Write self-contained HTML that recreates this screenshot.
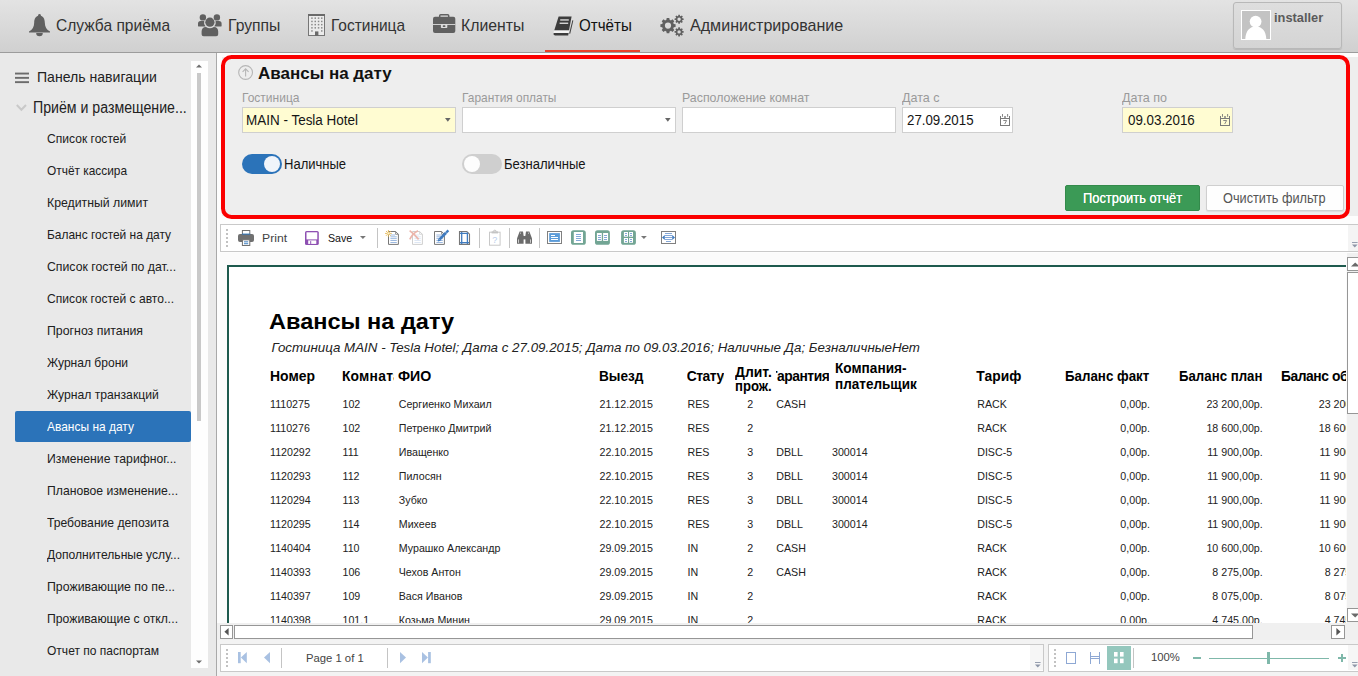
<!DOCTYPE html>
<html lang="ru"><head><meta charset="utf-8"><title>Авансы на дату</title>
<style>
html,body{margin:0;padding:0}
body{width:1358px;height:676px;overflow:hidden;position:relative;background:#fdfdfd;font-family:"Liberation Sans",sans-serif}
.t{position:absolute;white-space:nowrap;line-height:1;transform-origin:0 0;display:block}
.a{position:absolute;box-sizing:border-box}
svg{position:absolute;overflow:visible}
#nav{left:0;top:0;width:1358px;height:53px;background:linear-gradient(#e3e3e3,#d0d0d0);border-bottom:1px solid #9c9c9c}
#side{left:0;top:53px;width:216px;height:623px;background:#e9e9e9}
#sideb{left:216px;top:53px;width:1px;height:623px;background:#a9a9a9}
#panel{left:221px;top:55px;width:1129px;height:164px;border:4px solid #fb0000;border-radius:10.5px}
.inp{height:26px;top:107px;border:1px solid #cfcfcf;background:#fff}
.y{background:#fffcd2}
#tb{left:220px;top:224px;width:1140px;height:28px;background:#fff;border:1px solid #c9c9c9}
#viewer{left:220px;top:253px;width:1127px;height:370px;background:#fbfbfb;overflow:hidden}
#page{left:7px;top:12px;width:1119px;height:360px;background:#fff;border-left:2px solid #1e5a4e;border-top:2px solid #1e5a4e;overflow:hidden}
.sep{width:1px;background:#c4c4c4}
</style></head>
<body>
<div id="nav" class="a"></div>
<svg style="left:28.8px;top:13.7px" width="21" height="23" viewBox="0 0 21 23"><g fill="#606060"><circle cx="10.5" cy="1.3" r="1.3"/><path d="M10.5 1.6C6.6 1.9 5.3 5.2 5.2 8.4C5.1 12.6 3.6 15.6 0 17.6L0 18.4L21 18.4L21 17.6C17.4 15.6 15.9 12.6 15.8 8.4C15.7 5.2 14.4 1.9 10.5 1.6Z"/><path d="M7.2 19.1a3.3 3.2 0 0 0 6.6 0Z"/></g></svg><svg style="left:198px;top:13.9px" width="24" height="23" viewBox="0 0 24 23"><g fill="#606060"><circle cx="4.9" cy="3.4" r="3.2"/><circle cx="18.9" cy="3.4" r="3.2"/><path d="M0 12.2L0 9.6Q0 7 2.6 7L6.2 7Q5.4 10 7.6 12.6L3 12.6Q0 12.6 0 12.2Z"/><path d="M23.6 12.2L23.6 9.6Q23.6 7 21 7L17.6 7Q18.4 10 16.2 12.6L20.6 12.6Q23.6 12.6 23.6 12.2Z"/><circle cx="11.9" cy="8.2" r="4.6"/><path d="M3.6 20.2L3.6 17.6Q3.6 13.2 8 13Q11.9 15.6 15.8 13Q20.2 13.2 20.2 17.6L20.2 20.2Q20.2 22.2 18.2 22.2L5.6 22.2Q3.6 22.2 3.6 20.2Z"/></g></svg><svg style="left:308px;top:14px" width="17" height="22" viewBox="0 0 17 22"><rect x="0.5" y="0.5" width="16" height="21" fill="#ebebeb" stroke="#767676" stroke-width="1"/><rect x="0" y="0" width="17" height="2" fill="#6a6a6a"/><g fill="#8a8a8a"><rect x="3.2" y="3.4" width="1.5" height="1.5"/><rect x="6.5" y="3.4" width="1.5" height="1.5"/><rect x="9.8" y="3.4" width="1.5" height="1.5"/><rect x="13.0" y="3.4" width="1.5" height="1.5"/><rect x="3.2" y="6.7" width="1.5" height="1.5"/><rect x="6.5" y="6.7" width="1.5" height="1.5"/><rect x="9.8" y="6.7" width="1.5" height="1.5"/><rect x="13.0" y="6.7" width="1.5" height="1.5"/><rect x="3.2" y="9.9" width="1.5" height="1.5"/><rect x="6.5" y="9.9" width="1.5" height="1.5"/><rect x="9.8" y="9.9" width="1.5" height="1.5"/><rect x="13.0" y="9.9" width="1.5" height="1.5"/><rect x="3.2" y="13.1" width="1.5" height="1.5"/><rect x="6.5" y="13.1" width="1.5" height="1.5"/><rect x="9.8" y="13.1" width="1.5" height="1.5"/><rect x="13.0" y="13.1" width="1.5" height="1.5"/><rect x="3.2" y="16.2" width="1.5" height="1.5"/><rect x="13.0" y="16.2" width="1.5" height="1.5"/></g><rect x="7" y="17.4" width="3.4" height="4.6" fill="#6a6a6a"/></svg><svg style="left:433px;top:13.9px" width="23" height="20" viewBox="0 0 23 20"><rect x="6.7" y="0.7" width="9" height="4" rx="1" fill="none" stroke="#606060" stroke-width="1.5"/><rect x="0" y="2.8" width="22.3" height="16.3" rx="2" fill="#606060"/><rect x="0" y="10.1" width="22.3" height="0.9" fill="#dcdcdc"/><rect x="7.9" y="10.1" width="6.4" height="3.9" rx="0.8" fill="#dcdcdc"/><rect x="9.8" y="11.2" width="2.6" height="1.7" rx="0.5" fill="#606060"/></svg><svg style="left:553px;top:15.5px" width="21" height="20" viewBox="0 0 21 20"><g fill="#3c3c3c"><path d="M5.6 0.4L18.6 0.4L16 14.6L1.2 14.6Z"/><path d="M0.6 16.9L15.6 16.9L15.2 19.4L2 19.4Q0 19 0.6 16.9Z"/><path d="M19.4 4.2L20.3 4.6L17.2 17.8L16.2 17.4Z"/></g><path d="M1 14.6L16 14.6L15.6 16.9L0.6 16.9Z" fill="#f4f4f4"/><rect x="7.2" y="3.3" width="8.6" height="1.3" fill="#e4e4e4"/><rect x="6.6" y="6.6" width="8.6" height="1.3" fill="#e4e4e4"/></svg><svg style="left:660px;top:13.5px" width="25" height="24" viewBox="0 0 25 24"><path d="M13.78 10.00L15.59 10.30L15.59 12.90L13.78 13.20L13.22 14.56L14.29 16.05L12.45 17.89L10.96 16.82L9.60 17.38L9.30 19.19L6.70 19.19L6.40 17.38L5.04 16.82L3.55 17.89L1.71 16.05L2.78 14.56L2.22 13.20L0.41 12.90L0.41 10.30L2.22 10.00L2.78 8.64L1.71 7.15L3.55 5.31L5.04 6.38L6.40 5.82L6.70 4.01L9.30 4.01L9.60 5.82L10.96 6.38L12.45 5.31L14.29 7.15L13.22 8.64ZM4.90 11.6a3.1 3.1 0 1 0 6.2 0a3.1 3.1 0 1 0 -6.2 0Z" fill="#606060" fill-rule="evenodd"/><path d="M22.38 4.29L23.63 4.42L23.63 5.98L22.38 6.11L22.06 6.88L22.86 7.86L21.76 8.96L20.78 8.16L20.01 8.48L19.88 9.73L18.32 9.73L18.19 8.48L17.42 8.16L16.44 8.96L15.34 7.86L16.14 6.88L15.82 6.11L14.57 5.98L14.57 4.42L15.82 4.29L16.14 3.52L15.34 2.54L16.44 1.44L17.42 2.24L18.19 1.92L18.32 0.67L19.88 0.67L20.01 1.92L20.78 2.24L21.76 1.44L22.86 2.54L22.06 3.52ZM17.40 5.2a1.7 1.7 0 1 0 3.4 0a1.7 1.7 0 1 0 -3.4 0Z" fill="#606060" fill-rule="evenodd"/><path d="M22.38 16.99L23.63 17.12L23.63 18.68L22.38 18.81L22.06 19.58L22.86 20.56L21.76 21.66L20.78 20.86L20.01 21.18L19.88 22.43L18.32 22.43L18.19 21.18L17.42 20.86L16.44 21.66L15.34 20.56L16.14 19.58L15.82 18.81L14.57 18.68L14.57 17.12L15.82 16.99L16.14 16.22L15.34 15.24L16.44 14.14L17.42 14.94L18.19 14.62L18.32 13.37L19.88 13.37L20.01 14.62L20.78 14.94L21.76 14.14L22.86 15.24L22.06 16.22ZM17.40 17.9a1.7 1.7 0 1 0 3.4 0a1.7 1.7 0 1 0 -3.4 0Z" fill="#606060" fill-rule="evenodd"/></svg><div class="a" style="left:1233px;top:2px;width:109px;height:47px;border:1px solid #b8b8b8;border-radius:3px;background:linear-gradient(#dedede,#d4d4d4);box-shadow:0 1px 1px rgba(0,0,0,.12)"></div><svg style="left:1241px;top:10px" width="30" height="30" viewBox="0 0 30 30"><rect x="0.5" y="0.5" width="29" height="29" fill="#c3c3c3" stroke="#fff" stroke-width="1"/><circle cx="14.6" cy="11.6" r="5.9" fill="#fff"/><path d="M4.3 29C4.6 21 8.6 16.4 14.8 16.4C21 16.4 25 21 25.3 29Z" fill="#fff"/></svg><div class="a" style="left:545px;top:50px;width:95px;height:2px;background:#e8412b"></div>
<div id="side" class="a"></div><div id="sideb" class="a"></div>
<div class="a" style="left:191px;top:61px;width:17px;height:607px;background:#fefefe"></div>
<div class="a" style="left:197px;top:73px;width:4px;height:348px;background:#c9c9c9"></div>
<div class="a" style="left:15px;top:411px;width:176px;height:31px;background:#2b73b9;border-radius:2px"></div>
<svg style="left:15px;top:72px" width="14" height="12" viewBox="0 0 14 12"><g fill="#6c6c6c"><rect x="0" y="0.6" width="14" height="1.9"/><rect x="0" y="4.9" width="14" height="1.9"/><rect x="0" y="9.2" width="14" height="1.9"/></g></svg><svg style="left:15.5px;top:104px" width="11" height="8" viewBox="0 0 11 8"><path d="M0.8 1L5.4 5.8L10 1" fill="none" stroke="#c9c9c9" stroke-width="2"/></svg><svg style="left:196px;top:64px" width="6" height="4" viewBox="0 0 6 4"><path d="M0 3.4L3 0.4L6 3.4Z" fill="#6e6e6e"/></svg><svg style="left:196px;top:659.5px" width="6" height="4" viewBox="0 0 6 4"><path d="M0 0.4L3 3.4L6 0.4Z" fill="#6e6e6e"/></svg>
<div class="a" style="left:222px;top:57px;width:1136px;height:158.5px;background:#eeeeee"></div>
<div id="panel" class="a"></div>
<div class="a inp y" style="left:242px;width:214px"></div>
<div class="a inp" style="left:462px;width:214px"></div>
<div class="a inp" style="left:682px;width:214px"></div>
<div class="a inp" style="left:902px;width:111px"></div>
<div class="a inp y" style="left:1122px;width:111px"></div>
<div class="a" style="left:242px;top:154px;width:40px;height:20px;border-radius:10px;background:#2b73b9"></div>
<div class="a" style="left:264px;top:156px;width:16.4px;height:16.4px;border-radius:9px;background:#f0f4fa"></div>
<div class="a" style="left:462px;top:154px;width:40px;height:20px;border-radius:10px;background:#cfcfcf"></div>
<div class="a" style="left:464px;top:156px;width:16.2px;height:16px;border-radius:9px;background:#fdfdfd"></div>
<div class="a" style="left:1065px;top:185px;width:135px;height:26px;border-radius:2px;background:#3b9a56;border:1px solid #338a4b"></div>
<div class="a" style="left:1206px;top:185px;width:138px;height:26px;border-radius:2px;background:#fefefe;border:1px solid #cfcfcf;box-shadow:0 1px 1px rgba(0,0,0,.08)"></div>
<svg style="left:238px;top:65.2px" width="16" height="16" viewBox="0 0 16 16"><circle cx="7.6" cy="7.5" r="6.9" fill="none" stroke="#b6b6b6" stroke-width="1.1"/><path d="M7.6 11.4L7.6 3.8M4.6 6.8L7.6 3.8L10.6 6.8" fill="none" stroke="#b6b6b6" stroke-width="1.1"/></svg><svg style="left:445px;top:118px" width="6" height="4" viewBox="0 0 6 4"><path d="M0 0L5.6 0L2.8 3.8Z" fill="#666"/></svg><svg style="left:665px;top:118px" width="6" height="4" viewBox="0 0 6 4"><path d="M0 0L5.6 0L2.8 3.8Z" fill="#666"/></svg><svg style="left:1000px;top:114px" width="10" height="12" viewBox="0 0 10 12"><g fill="#7a7a7a"><rect x="0" y="2" width="1" height="10"/><rect x="9" y="2" width="1" height="10"/><rect x="0" y="4" width="10" height="1"/><rect x="0" y="11" width="10" height="1"/><rect x="2.1" y="0" width="0.9" height="2.8"/><rect x="7.2" y="0" width="0.9" height="2.8"/><rect x="4.3" y="2" width="1.4" height="2"/></g><path d="M3.3 6.5L6.6 6.5L4.7 10" fill="none" stroke="#7a7a7a" stroke-width="0.9"/></svg><svg style="left:1220px;top:114px" width="10" height="12" viewBox="0 0 10 12"><g fill="#7a7a7a"><rect x="0" y="2" width="1" height="10"/><rect x="9" y="2" width="1" height="10"/><rect x="0" y="4" width="10" height="1"/><rect x="0" y="11" width="10" height="1"/><rect x="2.1" y="0" width="0.9" height="2.8"/><rect x="7.2" y="0" width="0.9" height="2.8"/><rect x="4.3" y="2" width="1.4" height="2"/></g><path d="M3.3 6.5L6.6 6.5L4.7 10" fill="none" stroke="#7a7a7a" stroke-width="0.9"/></svg>
<div class="a" style="left:217px;top:639px;width:1141px;height:37px;background:#f3f3f3"></div>
<div id="tb" class="a"></div>
<div class="a" style="left:226px;top:229px;width:2px;height:2px;background:#c2c2c2"></div><div class="a" style="left:226px;top:233px;width:2px;height:2px;background:#c2c2c2"></div><div class="a" style="left:226px;top:237px;width:2px;height:2px;background:#c2c2c2"></div><div class="a" style="left:226px;top:241px;width:2px;height:2px;background:#c2c2c2"></div><div class="a" style="left:226px;top:245px;width:2px;height:2px;background:#c2c2c2"></div><svg style="left:238px;top:230px" width="16" height="16" viewBox="0 0 16 16"><rect x="0" y="4" width="16" height="8" rx="2" fill="#707070"/><rect x="4.4" y="0.5" width="7.4" height="4" fill="#fff" stroke="#707070" stroke-width="1"/><rect x="4" y="3.6" width="8.2" height="1" fill="#2b73b9"/><rect x="4.4" y="9.8" width="7.4" height="5.7" fill="#fff" stroke="#707070" stroke-width="1"/><rect x="6" y="11.4" width="4.2" height="0.9" fill="#2b73b9"/><rect x="6" y="13.3" width="4.2" height="0.9" fill="#2b73b9"/></svg><svg style="left:305px;top:231px" width="14" height="14" viewBox="0 0 14 14"><rect x="0" y="0" width="13.8" height="14" rx="1.6" fill="#8e50b2"/><rect x="1.5" y="1.3" width="10.8" height="7.1" fill="#fff"/><rect x="3.2" y="9.4" width="8.1" height="3.5" fill="#fff"/><rect x="5.2" y="10.1" width="1" height="2.8" fill="#8e50b2"/></svg><svg style="left:360px;top:236.2px" width="6" height="3" viewBox="0 0 6 3"><path d="M0 0L5.8 0L2.9 2.9Z" fill="#777"/></svg><div class="a sep" style="left:377px;top:228px;height:20px"></div><svg style="left:388.1px;top:231.3px" width="11" height="14" viewBox="0 0 11 14"><path d="M0.5 0.5L7.6 0.5L10.4 3.3L10.4 13.4L0.5 13.4Z" fill="#fff" stroke="#777" stroke-width="1"/><path d="M7.6 0.5L7.6 3.3L10.4 3.3" fill="none" stroke="#777" stroke-width="0.8"/><rect x="2.4" y="3.60" width="4.6" height="0.8" fill="#85a8d8"/><rect x="2.4" y="5.45" width="6.4" height="0.8" fill="#85a8d8"/><rect x="2.4" y="7.30" width="6.4" height="0.8" fill="#85a8d8"/><rect x="2.4" y="9.15" width="6.4" height="0.8" fill="#85a8d8"/><rect x="2.4" y="11.00" width="6.4" height="0.8" fill="#85a8d8"/></svg><svg style="left:384.9px;top:229.8px" width="7" height="7" viewBox="0 0 7 7"><g stroke="#e3b44f" stroke-width="0.85"><path d="M0 3.4L6.8 3.4M3.4 0L3.4 6.8M1 1L5.8 5.8M5.8 1L1 5.8"/></g><circle cx="3.4" cy="3.4" r="1.1" fill="#fff3c8"/></svg><svg style="left:412.2px;top:231.3px" width="11" height="14" viewBox="0 0 11 14"><path d="M0.5 0.5L7.6 0.5L10.4 3.3L10.4 13.4L0.5 13.4Z" fill="#fff" stroke="#cfcfcf" stroke-width="1"/><path d="M7.6 0.5L7.6 3.3L10.4 3.3" fill="none" stroke="#cfcfcf" stroke-width="0.8"/><rect x="2.4" y="3.60" width="4.6" height="0.8" fill="#d6e2f2"/><rect x="2.4" y="5.45" width="6.4" height="0.8" fill="#d6e2f2"/><rect x="2.4" y="7.30" width="6.4" height="0.8" fill="#d6e2f2"/><rect x="2.4" y="9.15" width="6.4" height="0.8" fill="#d6e2f2"/><rect x="2.4" y="11.00" width="6.4" height="0.8" fill="#d6e2f2"/></svg><svg style="left:408.8px;top:230.2px" width="11" height="10" viewBox="0 0 11 10"><path d="M0.6 0.6C4 3 6.6 5.6 9.6 9.4M9 0.8C5.6 2.6 2.6 5.4 0.8 9.4" fill="none" stroke="#ecb6ac" stroke-width="1.7"/></svg><svg style="left:434px;top:231.2px" width="16" height="14" viewBox="0 0 16 14"><g transform="translate(0,0)"><path d="M0.5 0.5L7.6 0.5L10.4 3.3L10.4 13.4L0.5 13.4Z" fill="#fff" stroke="#777" stroke-width="1"/><path d="M7.6 0.5L7.6 3.3L10.4 3.3" fill="none" stroke="#777" stroke-width="0.8"/><rect x="2.4" y="3.60" width="4.6" height="0.8" fill="#85a8d8"/><rect x="2.4" y="5.45" width="6.4" height="0.8" fill="#85a8d8"/><rect x="2.4" y="7.30" width="6.4" height="0.8" fill="#85a8d8"/><rect x="2.4" y="9.15" width="6.4" height="0.8" fill="#85a8d8"/><rect x="2.4" y="11.00" width="6.4" height="0.8" fill="#85a8d8"/></g><path d="M5.6 8.4L12 1.8" stroke="#3f7bbf" stroke-width="2.7" fill="none"/><path d="M12.2 1.6L14.4 -0.6" stroke="#3f7bbf" stroke-width="2.2" fill="none"/><path d="M3.8 10.4L4.4 7.4L7 9.8Z" fill="#3f7bbf"/></svg><svg style="left:459px;top:231.2px" width="12" height="14" viewBox="0 0 12 14"><path d="M0.5 0.5L7.8 0.5L10.5 3.2L10.5 13.4L0.5 13.4Z" fill="#fff" stroke="#777" stroke-width="1.1"/><g stroke="#3f7bbf" stroke-width="1.3"><path d="M2.7 1L2.7 13M8.4 1.4L8.4 13M1 2.3L9 2.3M1 11.7L10 11.7"/></g></svg><div class="a sep" style="left:479px;top:228px;height:20px"></div><svg style="left:489.3px;top:230.2px" width="12" height="16" viewBox="0 0 12 16"><rect x="0.5" y="2.2" width="10.6" height="13" fill="#fff" stroke="#c8c8c8" stroke-width="1"/><rect x="2.6" y="1.4" width="6.4" height="2" fill="#c4c4c4"/><path d="M4.4 1.6a1.4 1.4 0 0 1 2.8 0" fill="none" stroke="#c4c4c4" stroke-width="1"/><text x="5.8" y="12.6" font-size="9" text-anchor="middle" fill="#b9cdea" font-family="Liberation Sans, sans-serif">?</text></svg><div class="a sep" style="left:509px;top:228px;height:20px"></div><svg style="left:517px;top:231px" width="15" height="13" viewBox="0 0 15 13"><g fill="#6b6b6b"><path d="M2.6 0.6L6 0.6L6.6 4.6L6.6 12.8L0 12.8L0 7.4Z"/><path d="M9 0.6L12.4 0.6L15 7.4L15 12.8L8.4 12.8L8.4 4.6Z"/><rect x="6" y="5" width="3" height="3.4"/></g><g fill="#d8d8d8"><rect x="1" y="8.4" width="0.9" height="3.4"/><rect x="13.1" y="8.4" width="0.9" height="3.4"/><rect x="3.2" y="1.6" width="0.8" height="1.2"/><rect x="11" y="1.6" width="0.8" height="1.2"/></g></svg><div class="a sep" style="left:539px;top:228px;height:20px"></div><svg style="left:547px;top:231px" width="15" height="13" viewBox="0 0 15 13"><rect x="0.5" y="0.5" width="14" height="12" fill="#fff" stroke="#808080" stroke-width="1"/><rect x="2.2" y="2.1" width="10.7" height="8.8" fill="#5b9bd8"/><g fill="#fff"><rect x="4" y="4" width="4" height="1"/><rect x="4" y="6" width="7" height="1"/><rect x="4" y="8" width="7" height="1"/></g></svg><svg style="left:571px;top:230px" width="15" height="16" viewBox="0 0 15 16"><rect y="0.3" width="14.8" height="14.5" rx="2.6" fill="#72a594"/><rect x="2.8" y="2" width="9.2" height="11" fill="#fff"/><rect x="5" y="4" width="5" height="1" fill="#85a8d8"/><rect x="5" y="6" width="5" height="1" fill="#85a8d8"/><rect x="5" y="8" width="5" height="1" fill="#85a8d8"/><rect x="5" y="10" width="5" height="1" fill="#85a8d8"/></svg><svg style="left:595px;top:230px" width="15" height="16" viewBox="0 0 15 16"><rect y="0.3" width="14.9" height="14.5" rx="2.6" fill="#72a594"/><rect x="1.9" y="3" width="4.9" height="7.9" fill="#fff"/><rect x="8.1" y="3" width="5" height="7.9" fill="#fff"/><rect x="3" y="5" width="3" height="1" fill="#85a8d8"/><rect x="3" y="7" width="3" height="1" fill="#85a8d8"/><rect x="3" y="9" width="3" height="1" fill="#85a8d8"/><rect x="9" y="5" width="3" height="1" fill="#85a8d8"/><rect x="9" y="7" width="3" height="1" fill="#85a8d8"/><rect x="9" y="9" width="3" height="1" fill="#85a8d8"/></svg><svg style="left:621px;top:230px" width="16" height="16" viewBox="0 0 16 16"><rect x="0.1" y="0.3" width="14.8" height="14.5" rx="2.6" fill="#72a594"/><g fill="#fff"><rect x="2.9" y="2" width="4.1" height="4.7"/><rect x="8.1" y="2" width="3.9" height="4.7"/><rect x="2.9" y="8" width="4.1" height="4.8"/><rect x="8.1" y="8" width="3.9" height="4.8"/></g><rect x="4" y="3" width="2" height="1" fill="#85a8d8"/><rect x="4" y="5" width="2" height="1" fill="#85a8d8"/><rect x="4" y="9" width="2" height="1" fill="#85a8d8"/><rect x="4" y="11" width="2" height="1" fill="#85a8d8"/><rect x="9" y="3" width="2" height="1" fill="#85a8d8"/><rect x="9" y="5" width="2" height="1" fill="#85a8d8"/><rect x="9" y="9" width="2" height="1" fill="#85a8d8"/><rect x="9" y="11" width="2" height="1" fill="#85a8d8"/></svg><svg style="left:641.2px;top:236px" width="6" height="3" viewBox="0 0 6 3"><path d="M0 0L5.8 0L2.9 2.9Z" fill="#777"/></svg><svg style="left:661px;top:231px" width="15" height="13" viewBox="0 0 15 13"><rect x="0.5" y="0.5" width="14" height="12" fill="#fff" stroke="#808080" stroke-width="1"/><rect x="4" y="2" width="7" height="1" fill="#85a8d8"/><rect x="4" y="4" width="7" height="1" fill="#85a8d8"/><rect x="4" y="6" width="7" height="1" fill="#85a8d8"/><rect x="4" y="8" width="7" height="1" fill="#85a8d8"/><rect x="5" y="10" width="5" height="1" fill="#85a8d8"/><path d="M1 6.5L3.8 4L3.8 9Z M14 6.5L11.2 4L11.2 9Z" fill="#3f7bbf"/></svg><div class="a" style="left:1348px;top:225px;width:10px;height:26px;background:#f4f4f4"></div><svg style="left:1352px;top:242.3px" width="6" height="6" viewBox="0 0 6 6"><rect x="0" y="0" width="5.6" height="0.9" fill="#8d96a8"/><path d="M0 2.4L5.6 2.4L2.8 5.4Z" fill="#8d96a8"/></svg>
<div id="viewer" class="a"><div id="page" class="a">
<span class="t" style="left:39.63px;top:42.53px;font-size:22.9px;color:#000;font-weight:bold;transform:scaleX(1.0274);">Авансы на дату</span>
<span class="t" style="left:42.40px;top:73.67px;font-size:13.33px;color:#222;font-style:italic;">Гостиница MAIN - Tesla Hotel; Дата с 27.09.2015; Дата по 09.03.2016; Наличные Да; БезналичныеНет</span>
<span class="t" style="left:40.77px;top:102.73px;font-size:13.85px;color:#000;font-weight:bold;transform:scaleX(1.0079);">Номер</span>
<span class="t" style="left:168.92px;top:102.73px;font-size:13.85px;color:#000;font-weight:bold;transform:scaleX(1.0223);">ФИО</span>
<span class="t" style="left:369.67px;top:102.73px;font-size:13.85px;color:#000;font-weight:bold;transform:scaleX(0.9850);">Выезд</span>
<span class="t" style="left:505.92px;top:98.83px;font-size:13.85px;color:#000;font-weight:bold;transform:scaleX(1.0053);">Длит.</span>
<span class="t" style="left:505.92px;top:112.63px;font-size:13.85px;color:#000;font-weight:bold;transform:scaleX(0.9486);">прож.</span>
<span class="t" style="left:605.92px;top:94.93px;font-size:13.85px;color:#000;font-weight:bold;transform:scaleX(0.9853);">Компания-</span>
<span class="t" style="left:605.92px;top:110.63px;font-size:13.85px;color:#000;font-weight:bold;transform:scaleX(0.9762);">плательщик</span>
<span class="t" style="left:747.37px;top:102.73px;font-size:13.85px;color:#000;font-weight:bold;">Тариф</span>
<span class="t" style="left:835.97px;top:102.73px;font-size:13.85px;color:#000;font-weight:bold;transform:scaleX(0.9628);">Баланс факт</span>
<span class="t" style="left:949.97px;top:102.73px;font-size:13.85px;color:#000;font-weight:bold;transform:scaleX(0.9558);">Баланс план</span>
<span class="t" style="left:1052.00px;top:102.73px;font-size:13.85px;color:#000;font-weight:bold;letter-spacing:-0.45px;">Баланс об</span>
<span class="t" style="left:41.00px;top:131.93px;font-size:10.67px;color:#222;">1110275</span>
<span class="t" style="left:113.50px;top:131.93px;font-size:10.67px;color:#222;">102</span>
<span class="t" style="left:169.75px;top:131.93px;font-size:10.67px;color:#222;">Сергиенко Михаил</span>
<span class="t" style="left:370.50px;top:131.93px;font-size:10.67px;color:#222;">21.12.2015</span>
<span class="t" style="left:458.50px;top:131.93px;font-size:10.67px;color:#222;">RES</span>
<span class="t" style="left:547.25px;top:131.93px;font-size:10.67px;color:#222;">CASH</span>
<span class="t" style="left:748.20px;top:131.93px;font-size:10.67px;color:#222;">RACK</span>
<span class="t" style="left:0.00px;top:131.93px;font-size:10.67px;color:#222;left:auto;right:592.80px;transform-origin:100% 0;">2</span>
<span class="t" style="left:0.00px;top:131.93px;font-size:10.67px;color:#222;left:auto;right:196.00px;transform-origin:100% 0;">0,00р.</span>
<span class="t" style="left:0.00px;top:131.93px;font-size:10.67px;color:#222;left:auto;right:83.30px;transform-origin:100% 0;">23 200,00р.</span>
<span class="t" style="left:0.00px;top:131.93px;font-size:10.67px;color:#222;left:auto;right:-29.00px;transform-origin:100% 0;">23 200,00р.</span>
<span class="t" style="left:41.00px;top:155.93px;font-size:10.67px;color:#222;">1110276</span>
<span class="t" style="left:113.50px;top:155.93px;font-size:10.67px;color:#222;">102</span>
<span class="t" style="left:169.75px;top:155.93px;font-size:10.67px;color:#222;">Петренко Дмитрий</span>
<span class="t" style="left:370.50px;top:155.93px;font-size:10.67px;color:#222;">21.12.2015</span>
<span class="t" style="left:458.50px;top:155.93px;font-size:10.67px;color:#222;">RES</span>
<span class="t" style="left:748.20px;top:155.93px;font-size:10.67px;color:#222;">RACK</span>
<span class="t" style="left:0.00px;top:155.93px;font-size:10.67px;color:#222;left:auto;right:592.80px;transform-origin:100% 0;">2</span>
<span class="t" style="left:0.00px;top:155.93px;font-size:10.67px;color:#222;left:auto;right:196.00px;transform-origin:100% 0;">0,00р.</span>
<span class="t" style="left:0.00px;top:155.93px;font-size:10.67px;color:#222;left:auto;right:83.30px;transform-origin:100% 0;">18 600,00р.</span>
<span class="t" style="left:0.00px;top:155.93px;font-size:10.67px;color:#222;left:auto;right:-29.00px;transform-origin:100% 0;">18 600,00р.</span>
<span class="t" style="left:41.00px;top:179.93px;font-size:10.67px;color:#222;">1120292</span>
<span class="t" style="left:113.50px;top:179.93px;font-size:10.67px;color:#222;">111</span>
<span class="t" style="left:169.75px;top:179.93px;font-size:10.67px;color:#222;">Иващенко</span>
<span class="t" style="left:370.50px;top:179.93px;font-size:10.67px;color:#222;">22.10.2015</span>
<span class="t" style="left:458.50px;top:179.93px;font-size:10.67px;color:#222;">RES</span>
<span class="t" style="left:547.25px;top:179.93px;font-size:10.67px;color:#222;">DBLL</span>
<span class="t" style="left:603.00px;top:179.93px;font-size:10.67px;color:#222;">300014</span>
<span class="t" style="left:748.20px;top:179.93px;font-size:10.67px;color:#222;">DISC-5</span>
<span class="t" style="left:0.00px;top:179.93px;font-size:10.67px;color:#222;left:auto;right:592.80px;transform-origin:100% 0;">3</span>
<span class="t" style="left:0.00px;top:179.93px;font-size:10.67px;color:#222;left:auto;right:196.00px;transform-origin:100% 0;">0,00р.</span>
<span class="t" style="left:0.00px;top:179.93px;font-size:10.67px;color:#222;left:auto;right:83.30px;transform-origin:100% 0;">11 900,00р.</span>
<span class="t" style="left:0.00px;top:179.93px;font-size:10.67px;color:#222;left:auto;right:-29.00px;transform-origin:100% 0;">11 900,00р.</span>
<span class="t" style="left:41.00px;top:203.93px;font-size:10.67px;color:#222;">1120293</span>
<span class="t" style="left:113.50px;top:203.93px;font-size:10.67px;color:#222;">112</span>
<span class="t" style="left:169.75px;top:203.93px;font-size:10.67px;color:#222;">Пилосян</span>
<span class="t" style="left:370.50px;top:203.93px;font-size:10.67px;color:#222;">22.10.2015</span>
<span class="t" style="left:458.50px;top:203.93px;font-size:10.67px;color:#222;">RES</span>
<span class="t" style="left:547.25px;top:203.93px;font-size:10.67px;color:#222;">DBLL</span>
<span class="t" style="left:603.00px;top:203.93px;font-size:10.67px;color:#222;">300014</span>
<span class="t" style="left:748.20px;top:203.93px;font-size:10.67px;color:#222;">DISC-5</span>
<span class="t" style="left:0.00px;top:203.93px;font-size:10.67px;color:#222;left:auto;right:592.80px;transform-origin:100% 0;">3</span>
<span class="t" style="left:0.00px;top:203.93px;font-size:10.67px;color:#222;left:auto;right:196.00px;transform-origin:100% 0;">0,00р.</span>
<span class="t" style="left:0.00px;top:203.93px;font-size:10.67px;color:#222;left:auto;right:83.30px;transform-origin:100% 0;">11 900,00р.</span>
<span class="t" style="left:0.00px;top:203.93px;font-size:10.67px;color:#222;left:auto;right:-29.00px;transform-origin:100% 0;">11 900,00р.</span>
<span class="t" style="left:41.00px;top:227.93px;font-size:10.67px;color:#222;">1120294</span>
<span class="t" style="left:113.50px;top:227.93px;font-size:10.67px;color:#222;">113</span>
<span class="t" style="left:169.75px;top:227.93px;font-size:10.67px;color:#222;">Зубко</span>
<span class="t" style="left:370.50px;top:227.93px;font-size:10.67px;color:#222;">22.10.2015</span>
<span class="t" style="left:458.50px;top:227.93px;font-size:10.67px;color:#222;">RES</span>
<span class="t" style="left:547.25px;top:227.93px;font-size:10.67px;color:#222;">DBLL</span>
<span class="t" style="left:603.00px;top:227.93px;font-size:10.67px;color:#222;">300014</span>
<span class="t" style="left:748.20px;top:227.93px;font-size:10.67px;color:#222;">DISC-5</span>
<span class="t" style="left:0.00px;top:227.93px;font-size:10.67px;color:#222;left:auto;right:592.80px;transform-origin:100% 0;">3</span>
<span class="t" style="left:0.00px;top:227.93px;font-size:10.67px;color:#222;left:auto;right:196.00px;transform-origin:100% 0;">0,00р.</span>
<span class="t" style="left:0.00px;top:227.93px;font-size:10.67px;color:#222;left:auto;right:83.30px;transform-origin:100% 0;">11 900,00р.</span>
<span class="t" style="left:0.00px;top:227.93px;font-size:10.67px;color:#222;left:auto;right:-29.00px;transform-origin:100% 0;">11 900,00р.</span>
<span class="t" style="left:41.00px;top:251.93px;font-size:10.67px;color:#222;">1120295</span>
<span class="t" style="left:113.50px;top:251.93px;font-size:10.67px;color:#222;">114</span>
<span class="t" style="left:169.75px;top:251.93px;font-size:10.67px;color:#222;">Михеев</span>
<span class="t" style="left:370.50px;top:251.93px;font-size:10.67px;color:#222;">22.10.2015</span>
<span class="t" style="left:458.50px;top:251.93px;font-size:10.67px;color:#222;">RES</span>
<span class="t" style="left:547.25px;top:251.93px;font-size:10.67px;color:#222;">DBLL</span>
<span class="t" style="left:603.00px;top:251.93px;font-size:10.67px;color:#222;">300014</span>
<span class="t" style="left:748.20px;top:251.93px;font-size:10.67px;color:#222;">DISC-5</span>
<span class="t" style="left:0.00px;top:251.93px;font-size:10.67px;color:#222;left:auto;right:592.80px;transform-origin:100% 0;">3</span>
<span class="t" style="left:0.00px;top:251.93px;font-size:10.67px;color:#222;left:auto;right:196.00px;transform-origin:100% 0;">0,00р.</span>
<span class="t" style="left:0.00px;top:251.93px;font-size:10.67px;color:#222;left:auto;right:83.30px;transform-origin:100% 0;">11 900,00р.</span>
<span class="t" style="left:0.00px;top:251.93px;font-size:10.67px;color:#222;left:auto;right:-29.00px;transform-origin:100% 0;">11 900,00р.</span>
<span class="t" style="left:41.00px;top:275.93px;font-size:10.67px;color:#222;">1140404</span>
<span class="t" style="left:113.50px;top:275.93px;font-size:10.67px;color:#222;">110</span>
<span class="t" style="left:169.75px;top:275.93px;font-size:10.67px;color:#222;">Мурашко Александр</span>
<span class="t" style="left:370.50px;top:275.93px;font-size:10.67px;color:#222;">29.09.2015</span>
<span class="t" style="left:458.50px;top:275.93px;font-size:10.67px;color:#222;">IN</span>
<span class="t" style="left:547.25px;top:275.93px;font-size:10.67px;color:#222;">CASH</span>
<span class="t" style="left:748.20px;top:275.93px;font-size:10.67px;color:#222;">RACK</span>
<span class="t" style="left:0.00px;top:275.93px;font-size:10.67px;color:#222;left:auto;right:592.80px;transform-origin:100% 0;">2</span>
<span class="t" style="left:0.00px;top:275.93px;font-size:10.67px;color:#222;left:auto;right:196.00px;transform-origin:100% 0;">0,00р.</span>
<span class="t" style="left:0.00px;top:275.93px;font-size:10.67px;color:#222;left:auto;right:83.30px;transform-origin:100% 0;">10 600,00р.</span>
<span class="t" style="left:0.00px;top:275.93px;font-size:10.67px;color:#222;left:auto;right:-29.00px;transform-origin:100% 0;">10 600,00р.</span>
<span class="t" style="left:41.00px;top:299.93px;font-size:10.67px;color:#222;">1140393</span>
<span class="t" style="left:113.50px;top:299.93px;font-size:10.67px;color:#222;">106</span>
<span class="t" style="left:169.75px;top:299.93px;font-size:10.67px;color:#222;">Чехов Антон</span>
<span class="t" style="left:370.50px;top:299.93px;font-size:10.67px;color:#222;">29.09.2015</span>
<span class="t" style="left:458.50px;top:299.93px;font-size:10.67px;color:#222;">IN</span>
<span class="t" style="left:547.25px;top:299.93px;font-size:10.67px;color:#222;">CASH</span>
<span class="t" style="left:748.20px;top:299.93px;font-size:10.67px;color:#222;">RACK</span>
<span class="t" style="left:0.00px;top:299.93px;font-size:10.67px;color:#222;left:auto;right:592.80px;transform-origin:100% 0;">2</span>
<span class="t" style="left:0.00px;top:299.93px;font-size:10.67px;color:#222;left:auto;right:196.00px;transform-origin:100% 0;">0,00р.</span>
<span class="t" style="left:0.00px;top:299.93px;font-size:10.67px;color:#222;left:auto;right:83.30px;transform-origin:100% 0;">8 275,00р.</span>
<span class="t" style="left:0.00px;top:299.93px;font-size:10.67px;color:#222;left:auto;right:-29.00px;transform-origin:100% 0;">8 275,00р.</span>
<span class="t" style="left:41.00px;top:323.93px;font-size:10.67px;color:#222;">1140397</span>
<span class="t" style="left:113.50px;top:323.93px;font-size:10.67px;color:#222;">109</span>
<span class="t" style="left:169.75px;top:323.93px;font-size:10.67px;color:#222;">Вася Иванов</span>
<span class="t" style="left:370.50px;top:323.93px;font-size:10.67px;color:#222;">29.09.2015</span>
<span class="t" style="left:458.50px;top:323.93px;font-size:10.67px;color:#222;">IN</span>
<span class="t" style="left:748.20px;top:323.93px;font-size:10.67px;color:#222;">RACK</span>
<span class="t" style="left:0.00px;top:323.93px;font-size:10.67px;color:#222;left:auto;right:592.80px;transform-origin:100% 0;">2</span>
<span class="t" style="left:0.00px;top:323.93px;font-size:10.67px;color:#222;left:auto;right:196.00px;transform-origin:100% 0;">0,00р.</span>
<span class="t" style="left:0.00px;top:323.93px;font-size:10.67px;color:#222;left:auto;right:83.30px;transform-origin:100% 0;">8 075,00р.</span>
<span class="t" style="left:0.00px;top:323.93px;font-size:10.67px;color:#222;left:auto;right:-29.00px;transform-origin:100% 0;">8 075,00р.</span>
<span class="t" style="left:41.00px;top:347.93px;font-size:10.67px;color:#222;">1140398</span>
<span class="t" style="left:113.50px;top:347.93px;font-size:10.67px;color:#222;">101.1</span>
<span class="t" style="left:169.75px;top:347.93px;font-size:10.67px;color:#222;">Козьма Минин</span>
<span class="t" style="left:370.50px;top:347.93px;font-size:10.67px;color:#222;">29.09.2015</span>
<span class="t" style="left:458.50px;top:347.93px;font-size:10.67px;color:#222;">IN</span>
<span class="t" style="left:748.20px;top:347.93px;font-size:10.67px;color:#222;">RACK</span>
<span class="t" style="left:0.00px;top:347.93px;font-size:10.67px;color:#222;left:auto;right:592.80px;transform-origin:100% 0;">2</span>
<span class="t" style="left:0.00px;top:347.93px;font-size:10.67px;color:#222;left:auto;right:196.00px;transform-origin:100% 0;">0,00р.</span>
<span class="t" style="left:0.00px;top:347.93px;font-size:10.67px;color:#222;left:auto;right:83.30px;transform-origin:100% 0;">4 745,00р.</span>
<span class="t" style="left:0.00px;top:347.93px;font-size:10.67px;color:#222;left:auto;right:-29.00px;transform-origin:100% 0;">4 745,00р.</span>
<div class="a" style="left:112.9px;top:101.5px;width:52.6px;height:18px;overflow:hidden"><span class="t" style="left:0px;top:1.23px;font-size:13.85px;font-weight:bold;color:#000;letter-spacing:0.25px">Комната</span></div><div class="a" style="left:457.5px;top:101.5px;width:37.6px;height:18px;overflow:hidden"><span class="t" style="left:0.2px;top:1.23px;font-size:13.85px;font-weight:bold;color:#000;letter-spacing:-0.45px;">Статус</span></div><div class="a" style="left:547.0px;top:101.5px;width:53.4px;height:18px;overflow:hidden"><span class="t" style="left:auto;right:0px;letter-spacing:-0.36px;top:1.23px;font-size:13.85px;font-weight:bold;color:#000;letter-spacing:-0.45px;">Гарантия</span></div>
</div></div>
<div class="a" style="left:1347px;top:253px;width:11px;height:370px;background:#f0f0f0"></div><div class="a" style="left:1347px;top:257px;width:13px;height:14px;background:#fff;border:1px solid #969696"></div><svg style="left:1350.5px;top:261.5px" width="8" height="5" viewBox="0 0 8 5"><path d="M0 4.4L4.2 0.4L8.4 4.4Z" fill="#6a6a6a"/></svg><div class="a" style="left:1347px;top:272px;width:13px;height:142px;background:#fff;border:1px solid #969696"></div><div class="a" style="left:1347px;top:608px;width:13px;height:14px;background:#fff;border:1px solid #969696"></div><svg style="left:1350.5px;top:613px" width="8" height="5" viewBox="0 0 8 5"><path d="M0 0.4L8.4 0.4L4.2 4.4Z" fill="#6a6a6a"/></svg><div class="a" style="left:217px;top:623px;width:1141px;height:17px;background:#f0f0f0"></div><div class="a" style="left:220px;top:624.5px;width:12.5px;height:14.5px;background:#fff;border:1px solid #969696"></div><svg style="left:223.6px;top:628px" width="5" height="8" viewBox="0 0 5 8"><path d="M4.6 0L4.6 7.6L0.4 3.8Z" fill="#555"/></svg><div class="a" style="left:234px;top:624.5px;width:1019px;height:14.5px;background:#fff;border:1px solid #969696"></div><div class="a" style="left:1331px;top:624.5px;width:14px;height:14.5px;background:#fff;border:1px solid #969696"></div><svg style="left:1336px;top:628px" width="5" height="8" viewBox="0 0 5 8"><path d="M0.4 0L0.4 7.6L4.6 3.8Z" fill="#555"/></svg>
<div class="a" style="left:220px;top:644px;width:824px;height:27.5px;background:#fff;border:1px solid #c9c9c9"></div><div class="a" style="left:1048px;top:644px;width:312px;height:27.5px;background:#fff;border:1px solid #c9c9c9"></div><div class="a" style="left:226px;top:649px;width:2px;height:2px;background:#c2c2c2"></div><div class="a" style="left:226px;top:653px;width:2px;height:2px;background:#c2c2c2"></div><div class="a" style="left:226px;top:657px;width:2px;height:2px;background:#c2c2c2"></div><div class="a" style="left:226px;top:661px;width:2px;height:2px;background:#c2c2c2"></div><div class="a" style="left:226px;top:665px;width:2px;height:2px;background:#c2c2c2"></div><div class="a" style="left:1054px;top:649px;width:2px;height:2px;background:#c2c2c2"></div><div class="a" style="left:1054px;top:653px;width:2px;height:2px;background:#c2c2c2"></div><div class="a" style="left:1054px;top:657px;width:2px;height:2px;background:#c2c2c2"></div><div class="a" style="left:1054px;top:661px;width:2px;height:2px;background:#c2c2c2"></div><div class="a" style="left:1054px;top:665px;width:2px;height:2px;background:#c2c2c2"></div><svg style="left:238px;top:652.4px" width="9" height="12" viewBox="0 0 9 12"><rect x="0" y="0" width="2.7" height="11.2" fill="#a9c1e2"/><path d="M8.8 0L8.8 11.2L2.9 5.6Z" fill="#a9c1e2"/></svg><svg style="left:264px;top:652.4px" width="6" height="12" viewBox="0 0 6 12"><path d="M6 0L6 11.2L0 5.6Z" fill="#a9c1e2"/></svg><div class="a sep" style="left:281px;top:648px;height:20px"></div><div class="a sep" style="left:387px;top:648px;height:20px"></div><svg style="left:400.1px;top:652.4px" width="6" height="12" viewBox="0 0 6 12"><path d="M0 0L0 11.2L6 5.6Z" fill="#a9c1e2"/></svg><svg style="left:422px;top:652.4px" width="9" height="12" viewBox="0 0 9 12"><rect x="6.1" y="0" width="2.7" height="11.2" fill="#a9c1e2"/><path d="M0 0L0 11.2L5.9 5.6Z" fill="#a9c1e2"/></svg><div class="a" style="left:1030px;top:645px;width:13px;height:25px;background:#f6f6f6"></div><svg style="left:1034.6px;top:662.2px" width="6" height="6" viewBox="0 0 6 6"><rect x="0" y="0" width="5.6" height="0.9" fill="#8d96a8"/><path d="M0 2.4L5.6 2.4L2.8 5.4Z" fill="#8d96a8"/></svg><svg style="left:1066px;top:652px" width="10" height="12" viewBox="0 0 10 12"><rect x="0.5" y="0.5" width="9" height="11" fill="none" stroke="#8ea8d4" stroke-width="1"/></svg><svg style="left:1090px;top:652px" width="10" height="12" viewBox="0 0 10 12"><g fill="#8ea8d4"><rect x="0" y="0" width="1" height="12"/><rect x="9" y="0" width="1" height="12"/><rect x="0" y="4" width="10" height="1"/><rect x="0" y="6" width="10" height="1"/></g></svg><div class="a" style="left:1107px;top:646px;width:24px;height:24px;background:#94c7bd"></div><svg style="left:1114px;top:652.4px" width="10" height="12" viewBox="0 0 10 12"><g fill="#fff"><rect x="0" y="0" width="3.6" height="4.6"/><rect x="6" y="0" width="3.6" height="4.6"/><rect x="0" y="6.6" width="3.6" height="4.6"/><rect x="6" y="6.6" width="3.6" height="4.6"/></g></svg><div class="a sep" style="left:1133px;top:648px;height:20px"></div><div class="a" style="left:1193px;top:657px;width:8px;height:2px;background:#7fb8aa"></div><div class="a" style="left:1209px;top:658px;width:120px;height:1px;background:#7fb8aa"></div><div class="a" style="left:1267.3px;top:652px;width:2.6px;height:12px;background:#7fb8aa"></div><div class="a" style="left:1338px;top:657px;width:8px;height:2px;background:#7fb8aa"></div><div class="a" style="left:1341px;top:654px;width:2px;height:8px;background:#7fb8aa"></div><div class="a" style="left:1348px;top:645px;width:10px;height:25px;background:#f6f6f6"></div><svg style="left:1352px;top:662.2px" width="6" height="6" viewBox="0 0 6 6"><rect x="0" y="0" width="5.6" height="0.9" fill="#8d96a8"/><path d="M0 2.4L5.6 2.4L2.8 5.4Z" fill="#8d96a8"/></svg>
<span class="t" style="left:55.68px;top:16.55px;font-size:17px;color:#333;transform:scaleX(0.9153);">Служба приёма</span>
<span class="t" style="left:227.98px;top:16.55px;font-size:17px;color:#333;transform:scaleX(0.9243);">Группы</span>
<span class="t" style="left:331.28px;top:16.55px;font-size:17px;color:#333;transform:scaleX(0.9101);">Гостиница</span>
<span class="t" style="left:461.18px;top:16.55px;font-size:17px;color:#333;transform:scaleX(0.9296);">Клиенты</span>
<span class="t" style="left:579.38px;top:16.55px;font-size:17px;color:#111;transform:scaleX(0.8911);">Отчёты</span>
<span class="t" style="left:689.58px;top:16.55px;font-size:17px;color:#333;transform:scaleX(0.9455);">Администрирование</span>
<span class="t" style="left:1274.42px;top:10.95px;font-size:13px;color:#5a5a5a;font-weight:bold;transform:scaleX(0.9874);">installer</span>
<span class="t" style="left:36.90px;top:68.75px;font-size:15px;color:#222;transform:scaleX(0.9378);">Панель навигации</span>
<span class="t" style="left:32.64px;top:100.40px;font-size:16px;color:#222;transform:scaleX(0.8846);">Приём и размещение...</span>
<span class="t" style="left:46.71px;top:132.08px;font-size:13.2px;color:#202020;transform:scaleX(0.9152);">Список гостей</span>
<span class="t" style="left:46.71px;top:164.08px;font-size:13.2px;color:#202020;transform:scaleX(0.9012);">Отчёт кассира</span>
<span class="t" style="left:46.71px;top:196.08px;font-size:13.2px;color:#202020;transform:scaleX(0.9314);">Кредитный лимит</span>
<span class="t" style="left:46.71px;top:228.08px;font-size:13.2px;color:#202020;transform:scaleX(0.9050);">Баланс гостей на дату</span>
<span class="t" style="left:46.71px;top:260.08px;font-size:13.2px;color:#202020;transform:scaleX(0.9304);">Список гостей по дат...</span>
<span class="t" style="left:46.71px;top:292.08px;font-size:13.2px;color:#202020;transform:scaleX(0.9155);">Список гостей с авто...</span>
<span class="t" style="left:46.71px;top:324.08px;font-size:13.2px;color:#202020;transform:scaleX(0.9355);">Прогноз питания</span>
<span class="t" style="left:46.71px;top:356.08px;font-size:13.2px;color:#202020;transform:scaleX(0.9142);">Журнал брони</span>
<span class="t" style="left:46.71px;top:388.08px;font-size:13.2px;color:#202020;transform:scaleX(0.9219);">Журнал транзакций</span>
<span class="t" style="left:46.71px;top:420.08px;font-size:13.2px;color:#fff;transform:scaleX(0.9075);">Авансы на дату</span>
<span class="t" style="left:46.71px;top:452.08px;font-size:13.2px;color:#202020;transform:scaleX(0.9261);">Изменение тарифног...</span>
<span class="t" style="left:46.71px;top:484.08px;font-size:13.2px;color:#202020;transform:scaleX(0.9246);">Плановое изменение...</span>
<span class="t" style="left:46.71px;top:516.08px;font-size:13.2px;color:#202020;transform:scaleX(0.9207);">Требование депозита</span>
<span class="t" style="left:46.71px;top:548.08px;font-size:13.2px;color:#202020;transform:scaleX(0.9172);">Дополнительные услу...</span>
<span class="t" style="left:46.71px;top:580.08px;font-size:13.2px;color:#202020;transform:scaleX(0.9340);">Проживающие по пе...</span>
<span class="t" style="left:46.71px;top:612.08px;font-size:13.2px;color:#202020;transform:scaleX(0.9266);">Проживающие с откл...</span>
<span class="t" style="left:46.71px;top:644.08px;font-size:13.2px;color:#202020;transform:scaleX(0.9125);">Отчет по паспортам</span>
<span class="t" style="left:258.34px;top:65.80px;font-size:16px;color:#111;font-weight:bold;transform:scaleX(1.0620);">Авансы на дату</span>
<span class="t" style="left:241.72px;top:90.85px;font-size:13px;color:#9a9a9a;transform:scaleX(0.9228);">Гостиница</span>
<span class="t" style="left:461.72px;top:90.85px;font-size:13px;color:#9a9a9a;transform:scaleX(0.9154);">Гарантия оплаты</span>
<span class="t" style="left:681.72px;top:90.85px;font-size:13px;color:#9a9a9a;transform:scaleX(0.9505);">Расположение комнат</span>
<span class="t" style="left:901.72px;top:90.85px;font-size:13px;color:#9a9a9a;transform:scaleX(0.9621);">Дата с</span>
<span class="t" style="left:1121.72px;top:90.85px;font-size:13px;color:#9a9a9a;transform:scaleX(0.9627);">Дата по</span>
<span class="t" style="left:245.66px;top:112.60px;font-size:14px;color:#151515;transform:scaleX(0.9621);">MAIN - Tesla Hotel</span>
<span class="t" style="left:907.16px;top:112.60px;font-size:14px;color:#151515;transform:scaleX(0.9495);">27.09.2015</span>
<span class="t" style="left:1127.91px;top:112.60px;font-size:14px;color:#151515;transform:scaleX(0.9531);">09.03.2016</span>
<span class="t" style="left:283.66px;top:156.85px;font-size:14px;color:#151515;transform:scaleX(0.9292);">Наличные</span>
<span class="t" style="left:503.66px;top:156.85px;font-size:14px;color:#151515;transform:scaleX(0.9322);">Безналичные</span>
<span class="t" style="left:1082.66px;top:191.10px;font-size:14px;color:#fff;transform:scaleX(0.9201);text-shadow:0 0 0.6px #fff;">Построить отчёт</span>
<span class="t" style="left:1223.16px;top:191.10px;font-size:14px;color:#555;transform:scaleX(0.9094);">Очистить фильтр</span>
<span class="t" style="left:261.71px;top:232.72px;font-size:11.5px;color:#444;transform:scaleX(1.0596);">Print</span>
<span class="t" style="left:327.61px;top:232.72px;font-size:11.5px;color:#111;transform:scaleX(0.9255);">Save</span>
<span class="t" style="left:305.91px;top:652.93px;font-size:11.5px;color:#444;transform:scaleX(0.9802);">Page 1 of 1</span>
<span class="t" style="left:1150.61px;top:652.12px;font-size:11.5px;color:#444;transform:scaleX(0.9811);">100%</span>
</body></html>
